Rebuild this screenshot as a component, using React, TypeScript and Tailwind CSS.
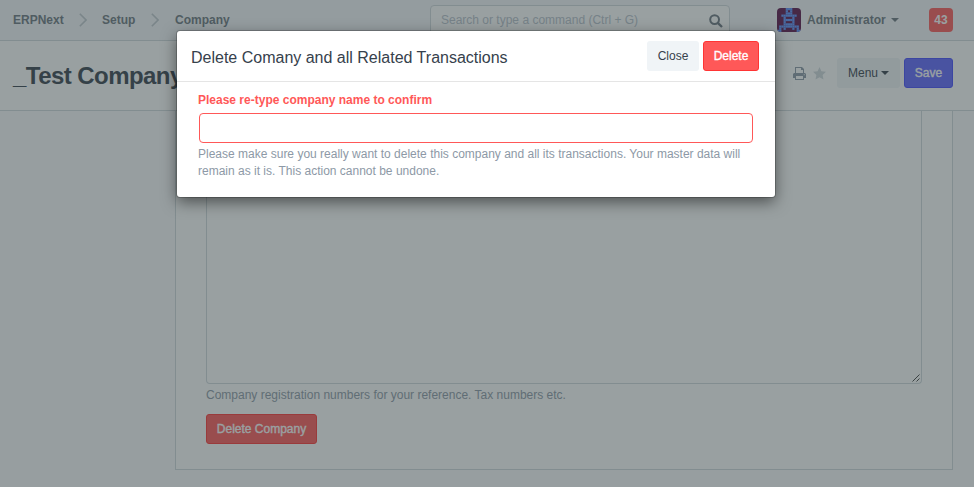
import type { ReactNode } from "react";

const AVATAR = [
  "....###....",
  "....#.#....",
  "....###....",
  "..#######..",
  "...#...#...",
  "...#####...",
  "...#...#...",
  "...#####...",
  ".#########.",
  ".#.#...#.#.",
  "##.......##",
];

function Avatar() {
  return (
    <svg className="h-6 w-6 rounded-[4px] bg-[#5b1149]" viewBox="0 0 11 11">
      {AVATAR.flatMap((row, y) =>
        row.split("").map((c, x) =>
          c === "#" ? <rect key={`${x}-${y}`} x={x} y={y} width="1.02" height="1.02" fill="#5c92ff" /> : null,
        ),
      )}
    </svg>
  );
}

function Chevron() {
  return (
    <svg className="h-[14px] w-[8px]" viewBox="0 0 8 14" fill="none" stroke="#c0c8cf" strokeWidth="1.6">
      <path d="M0.8 0.8 7 7 0.8 13.2" />
    </svg>
  );
}

function Caret({ className }: { className: string }) {
  return <span className={`h-0 w-0 border-x-4 border-t-4 border-x-transparent ${className}`} />;
}

function Crumb({ children, className }: { children: ReactNode; className: string }) {
  return <span className={`shrink-0 whitespace-nowrap ${className}`}>{children}</span>;
}

function Navbar() {
  return (
    <header className="flex h-[41px] items-center border-b border-[#d1d8dd] bg-[#f5f7fa] pr-[21px] pl-[13px] font-bold text-[#6c7680]">
      <Crumb className="w-[66px]">ERPNext</Crumb>
      <Chevron />
      <Crumb className="ml-[15px] w-[49px]">Setup</Crumb>
      <Chevron />
      <Crumb className="ml-[16px] w-[55px]">Company</Crumb>
      <div className="ml-[200px] flex h-[30px] w-[300px] shrink-0 items-center justify-between rounded-[4px] border border-[#d1d8dd] bg-white pr-[6px] pl-[10px] font-normal text-[#b8c2cc]">
        <span className="whitespace-nowrap">Search or type a command (Ctrl + G)</span>
        <svg className="mt-px h-[14px] w-[14px]" viewBox="0 0 14 14" fill="none" stroke="#6c7680" strokeWidth="2">
          <circle cx="5.6" cy="5.6" r="4.4" />
          <path d="m8.8 8.8 4.2 4.2" strokeWidth="2.4" />
        </svg>
      </div>
      <div className="ml-auto flex items-center">
        <Avatar />
        <span className="ml-[6px] w-[84px] whitespace-nowrap">Administrator</span>
        <Caret className="border-t-[#6c7680]" />
        <span className="ml-[30px] flex h-6 w-6 items-center justify-center rounded-[4px] bg-[#ff5858] text-white">43</span>
      </div>
    </header>
  );
}

function PageHead() {
  return (
    <div className="flex h-[70px] items-center border-b border-[#d1d8dd] bg-white pr-[21px] pb-[5px] pl-[13px]">
      <h1 className="pt-[6px] text-[24px] font-bold tracking-[-0.55px] whitespace-nowrap text-[#36414c]">_Test Company</h1>
      <div className="ml-auto flex items-center">
        <svg className="h-[13px] w-[13px]" viewBox="0 0 13 13">
          <path
            fill="#8d99a6"
            fillRule="evenodd"
            d="M2 0h7l2 2v4h1l1 1v4h-2v2H2v-2H0V7l1-1h1zM3 1v5h7V3H8V1zM3 9v3h7V9zM10.7 7.2v1h1v-1z"
          />
        </svg>
        <svg className="ml-[7px] h-[13px] w-[13px]" viewBox="0 0 13 13">
          <path fill="#d1d8dd" d="m6.5 0 1.9 4.3 4.6.5-3.4 3.1.9 4.7-4-2.3-4 2.3.9-4.7L0 4.8l4.6-.5z" />
        </svg>
        <button className="ml-[11px] flex h-[30px] w-[63px] items-center justify-center rounded-[3px] bg-[#f0f4f7] text-[#36414c]">
          Menu
          <Caret className="ml-[3px] border-t-[#36414c]" />
        </button>
        <button className="ml-1 h-[30px] w-[49px] rounded-[3px] border border-[#444bff] bg-[#5e64ff] text-white [-webkit-text-stroke:0.35px]">
          Save
        </button>
      </div>
    </div>
  );
}

function Form() {
  return (
    <main className="flex h-[376px] bg-[#fafbfc] pr-[21px] pb-[17px] pl-[175px]">
      <div className="flex-1 border-x border-b border-[#d1d8dd] bg-white px-[30px]">
        <div className="flex h-[273px] w-[716px] items-end justify-end rounded-b-[4px] border-x border-b border-[#d1d8dd]">
          <svg className="mr-px mb-px h-[8px] w-[8px]" viewBox="0 0 8 8" stroke="#444" strokeWidth="1">
            <path d="M0.5 7.5 7.5 0.5M4.5 7.5 7.5 4.5" />
          </svg>
        </div>
        <p className="mt-[3px] h-[17px] leading-[17px] whitespace-nowrap text-[#8d99a6]">
          Company registration numbers for your reference. Tax numbers etc.
        </p>
        <button className="mt-[10px] h-[30px] w-[111px] rounded-[3px] border border-[#ff3434] bg-[#ff5858] whitespace-nowrap text-white [-webkit-text-stroke:0.35px]">
          Delete Company
        </button>
      </div>
    </main>
  );
}

function DeleteDialog() {
  return (
    <div className="absolute inset-0 flex items-start bg-[#334143]/50 pt-[31px] pl-[177px]">
      <section
        role="dialog"
        className="h-[166px] w-[598px] rounded-[3px] bg-white shadow-[0_5px_15px_rgba(0,0,0,0.5),0_0_0_1px_rgba(0,0,0,0.2)]"
      >
        <div className="flex h-[51px] items-center border-b border-[#e5e5e5] pr-4 pl-[14px]">
          <h4 className="pt-[4px] text-[16px] whitespace-nowrap text-[#36414c]">Delete Comany and all Related Transactions</h4>
          <button className="ml-auto h-[30px] w-[52px] rounded-[3px] bg-[#f0f4f7] text-[#36414c]">Close</button>
          <button className="ml-1 h-[30px] w-[56px] rounded-[3px] border border-[#ff3434] bg-[#ff5858] text-white [-webkit-text-stroke:0.35px]">
            Delete
          </button>
        </div>
        <div className="pr-[22px] pl-[21px] pt-[10px] leading-[17px]">
          <label className="block font-bold whitespace-nowrap text-[#ff5858]">
            <span>Please re-type company name to confirm</span>
            <input className="mt-[4px] ml-px block h-[30px] w-[554px] rounded-[4px] border border-[#ff5858] bg-white px-2 outline-none" />
          </label>
          <p className="mt-[3px] whitespace-nowrap text-[#8d99a6]">
            <span className="block">Please make sure you really want to delete this company and all its transactions. Your master data will</span>
            <span className="block">remain as it is. This action cannot be undone.</span>
          </p>
        </div>
      </section>
    </div>
  );
}

export default function App() {
  return (
    <div className="relative h-[487px] w-[974px] overflow-hidden bg-white font-['Liberation_Sans',Arial,sans-serif] text-[12px]">
      <Navbar />
      <PageHead />
      <Form />
      <DeleteDialog />
    </div>
  );
}
